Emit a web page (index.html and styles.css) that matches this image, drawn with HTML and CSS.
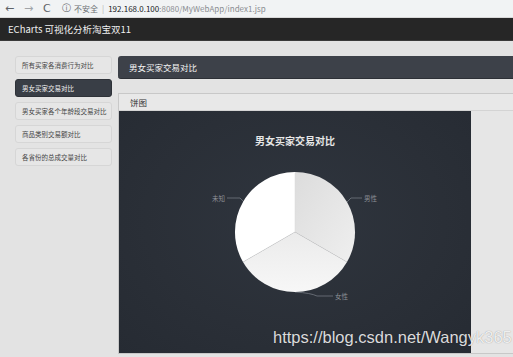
FILE: index.html
```html
<!DOCTYPE html>
<html lang="zh">

<head>
    <meta charset="UTF-8">
    <title>ECharts 可视化分析淘宝双11</title>
    <link rel="stylesheet" href="styles.css">
</head>

<body>
    <div class="browser">
        <span class="nav">&#8592;</span>
        <span class="nav dim">&#8594;</span>
        <span class="nav">C</span>
        <div class="address">
            <span class="info">&#9432;</span>
            <span class="unsafe">不安全</span>
            <span class="sep">|</span>
            <span class="host">192.168.0.100</span><span class="path">:8080/MyWebApp/index1.jsp</span>
        </div>
    </div>

    <div class="topbar">ECharts 可视化分析淘宝双11</div>

    <div class="main">
        <!-- left menu -->
        <div class="menu">
            <div class="item">所有买家各消费行为对比</div>
            <div class="item active">男女买家交易对比</div>
            <div class="item">男女买家各个年龄段交易对比</div>
            <div class="item">商品类别交易额对比</div>
            <div class="item">各省份的总成交量对比</div>
        </div>

        <div class="content">
            <div class="heading">男女买家交易对比</div>
            <div class="panel">
                <div class="panel-title">饼图</div>
                <div class="panel-body">
                    <div class="chart">
                        <svg width="352" height="242" viewBox="0 0 352 242">
                            <defs>
                                <linearGradient id="male" x1="0" y1="0" x2="1" y2="1">
                                    <stop offset="0" stop-color="#dcdcdc" />
                                    <stop offset="1" stop-color="#efefef" />
                                </linearGradient>
                                <linearGradient id="female" x1="0" y1="0" x2="0" y2="1">
                                    <stop offset="0" stop-color="#ebebeb" />
                                    <stop offset="1" stop-color="#f7f7f7" />
                                </linearGradient>
                            </defs>
                            <text class="title" x="176" y="34" text-anchor="middle">男女买家交易对比</text>
                            <!-- label lines -->
                            <path class="guide" d="M108 87 H121 L125 91" />
                            <path class="guide" d="M228 91 L232 87 H243" />
                            <path class="guide" d="M176 181 Q192 182 198 185 H214" />
                            <text class="label" x="93" y="90">未知</text>
                            <text class="label" x="245" y="90">男性</text>
                            <text class="label" x="216" y="188">女性</text>
                            <!-- slices -->
                            <path d="M176 121 L176 61 A60 60 0 0 1 228 151 Z" fill="url(#male)" />
                            <path d="M176 121 L228 151 A60 60 0 0 1 124 151 Z" fill="url(#female)" />
                            <path d="M176 121 L124 151 A60 60 0 0 1 176 61 Z" fill="#ffffff" />
                            <path class="edge" d="M176 121 L176 61 M176 121 L228 151 M176 121 L124 151" />
                        </svg>
                    </div>
                </div>
            </div>
        </div>
    </div>

    <div class="watermark">https://blog.csdn.net/Wangyk365</div>
</body>

</html>
```

FILE: styles.css
```css
body {
    margin: 0;
    background-color: #e3e3e3;
    font-family: "Noto Sans CJK SC", "Liberation Sans", sans-serif;
    width: 513px;
    height: 357px;
    overflow: hidden;
    position: relative;
}

.browser {
    height: 17px;
    background-color: #f1f3f4;
    display: flex;
    align-items: center;
    padding-left: 5px;
    font-size: 8px;
    color: #5f6368;
    border-bottom: 1px solid #d8d8d8;
}

.nav {
    width: 19px;
    font-size: 11px;
    font-family: "DejaVu Sans", sans-serif;
}

.nav.dim {
    color: #a0a4a8;
}

.address {
    display: flex;
    align-items: center;
    height: 17px;
    flex: 1;
    gap: 3px;
}

.info {
    font-size: 9px;
    font-family: "DejaVu Sans", sans-serif;
}

.unsafe {
    color: #6b6f73;
}

.sep {
    color: #b0b0b0;
    margin: 0 1px;
}

.host {
    color: #202124;
}

.path {
    color: #8a8d91;
    margin-left: -3px;
}

.topbar {
    height: 22px;
    background-color: #262626;
    color: #f0f0f0;
    font-size: 9.5px;
    line-height: 22px;
    padding-left: 8px;
    border-bottom: 1px solid #3a3a3a;
}

.main {
    display: flex;
    padding-top: 15px;
    padding-left: 15px;
    gap: 6px;
}

.menu {
    width: 97px;
    display: flex;
    flex-direction: column;
    gap: 5px;
}

.item {
    height: 16px;
    line-height: 16px;
    font-size: 6.5px;
    color: #444;
    padding-left: 6px;
    border: 1px solid #d6d6d6;
    border-radius: 3px;
    background-color: #e6e6e6;
    white-space: nowrap;
}

.item.active {
    background-color: #393e46;
    border-color: #2e3238;
    color: #f2f2f2;
}

.content {
    flex: 1;
}

.heading {
    height: 22px;
    line-height: 22px;
    background-color: #3d4149;
    color: #f5f5f5;
    font-size: 8.5px;
    padding-left: 11px;
    border-radius: 3px 0 0 3px;
    border-bottom: 1px solid #2d3036;
}

.panel {
    margin-top: 14px;
    border-top: 1px solid #c8c8c8;
    border-left: 1px solid #c8c8c8;
    border-bottom: 1px solid #c8c8c8;
}

.panel-title {
    height: 16px;
    line-height: 16px;
    font-size: 8.5px;
    color: #333;
    padding-left: 11px;
    background-color: #e8e8e8;
    border-bottom: 1px solid #d4d4d4;
}

.panel-body {
    background-color: #e6e6e6;
    height: 242px;
}

.chart {
    width: 352px;
    height: 242px;
    background: radial-gradient(ellipse at 50% 45%, #2f353e 0%, #2a2f37 60%, #262b33 100%);
}

.chart svg {
    display: block;
}

.title {
    fill: #e6e6e6;
    font-size: 10px;
    font-weight: bold;
}

.label {
    fill: #8c9097;
    font-size: 6.5px;
}

.guide {
    fill: none;
    stroke: #7d838b;
    stroke-width: 0.7;
}

.edge {
    stroke: #d8d8d8;
    stroke-width: 0.5;
}

.watermark {
    position: absolute;
    left: 273px;
    top: 328px;
    font-family: "Liberation Sans", sans-serif;
    font-size: 16.5px;
    color: rgba(255, 255, 255, 0.85);
    text-shadow: 0 0 1px rgba(0, 0, 0, 0.4);
    white-space: nowrap;
}
```
